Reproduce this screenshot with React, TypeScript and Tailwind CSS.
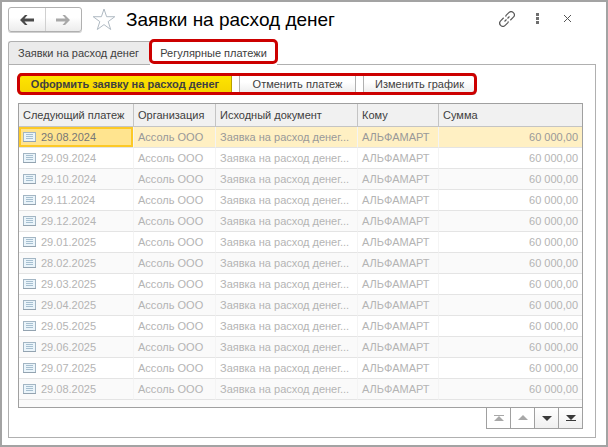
import type { ReactNode } from "react";

const dates = [
  "29.08.2024",
  "29.09.2024",
  "29.10.2024",
  "29.11.2024",
  "29.12.2024",
  "29.01.2025",
  "28.02.2025",
  "29.03.2025",
  "29.04.2025",
  "29.05.2025",
  "29.06.2025",
  "29.07.2025",
  "29.08.2025",
];

function RowIcon() {
  return (
    <svg width="13" height="10" viewBox="0 0 13 10" className="shrink-0" shapeRendering="crispEdges" aria-hidden="true">
      <rect width="13" height="10" fill="#a3b6c4" />
      <rect x="1" y="1" width="11" height="8" fill="#eaf4fa" />
      <rect x="0" y="9" width="13" height="1" fill="#93a3b0" />
      <path d="M3 2.5h7M3 4.5h7M3 6.5h7" stroke="#a6bfd0" />
    </svg>
  );
}

function Header() {
  return (
    <header className="flex h-[39px] items-start pl-[6px] pr-[26px] pt-[5px]">
      <div className="flex h-[25px] w-[74px] rounded-[3px] border border-[#b0b0b0] bg-linear-to-b from-white from-40% to-[#ececec] shadow-[0_1px_0_#d0d0d0]">
        <button type="button" aria-label="Назад" className="flex flex-1 items-center justify-center border-r border-[#d0d0d0]">
          <svg width="14" height="10" viewBox="0 0 14 10" aria-hidden="true">
            <path d="M0 5 5 0h2.500L4.500 3.500H14v3H4.500L7.500 10H5z" fill="#4a4a4a" />
          </svg>
        </button>
        <button type="button" aria-label="Вперед" className="flex flex-1 items-center justify-center">
          <svg width="14" height="10" viewBox="0 0 14 10" aria-hidden="true">
            <path d="M14 5 9 0H6.500l3 3.500H0v3h9.500l-3 3.500H9z" fill="#a8a8a8" />
          </svg>
        </button>
      </div>
      <button type="button" aria-label="В избранное" className="ml-[10px]">
        <svg width="24" height="24" viewBox="0 0 24 24" fill="none" stroke="#b0bac3" aria-hidden="true">
          <path d="M12 2l2.600 7.700h8.200l-6.600 4.900 2.500 7.900-6.700-4.900-6.700 4.900 2.500-7.900-6.600-4.900h8.200z" />
        </svg>
      </button>
      <h1 className="ml-[10px] text-[19px] leading-[25px] text-black">Заявки на расход денег</h1>
      <div className="ml-auto flex h-[23px] items-center">
        <button type="button" aria-label="Получить ссылку" className="mr-[21px]">
          <svg width="16" height="16" viewBox="0 0 16 16" fill="none" stroke="#5a5a5a" strokeWidth="1.200" aria-hidden="true">
            <g transform="rotate(-45 8 8)">
              <path d="M6.500 4.800H2.200a3.200 3.200 0 0 0 0 6.400h3.600a3 3 0 0 0 1.500-.6" />
              <path d="M9.500 11.200h4.300a3.200 3.200 0 0 0 0-6.400h-3.600a3 3 0 0 0-1.500.6" />
              <path d="M4.500 8h2.800M8.700 8h2.800" />
            </g>
          </svg>
        </button>
        <button type="button" aria-label="Ещё" className="mr-[25px]">
          <svg width="3" height="11" viewBox="0 0 3 11" fill="#6e6e6e" aria-hidden="true">
            <path d="M0 0h3v3H0zM0 4h3v3H0zM0 8h3v3H0z" />
          </svg>
        </button>
        <button type="button" aria-label="Закрыть" className="mr-[9px]">
          <svg width="7" height="7" viewBox="0 0 7 7" stroke="#555" aria-hidden="true">
            <path d="M0 0l7 7M7 0L0 7" />
          </svg>
        </button>
      </div>
    </header>
  );
}

function PageButton({ label, disabled, children }: { label: string; disabled?: boolean; children: ReactNode }) {
  return (
    <button
      type="button"
      aria-label={label}
      disabled={disabled}
      className="flex h-[21px] w-[24px] items-center justify-center border-b border-r border-[#a0a0a0] bg-linear-to-b from-white to-[#f0f0f0] text-[#3a3a3a] disabled:bg-none disabled:text-[#a8a8a8]"
    >
      <svg width="10" height="8" viewBox="0 0 10 8" fill="currentColor" aria-hidden="true">
        {children}
      </svg>
    </button>
  );
}

export default function App() {
  return (
    <div className="flex min-h-screen flex-col border-2 border-[#a3a3a3] bg-white font-['Liberation_Sans',Arial,sans-serif] text-[11px] leading-[16px] text-[#404040]">
      <Header />

      <div role="tablist" className="flex h-[23px] pl-[6px]">
        <button type="button" role="tab" aria-selected="false" className="w-[142px] whitespace-nowrap rounded-tl-[3px] border-l border-t border-[#b0b0b0] bg-[#ebebeb] pl-[9px] text-left">
          Заявки на расход денег
        </button>
        <button type="button" role="tab" aria-selected="true" className="relative z-10 -mb-px w-[127px] whitespace-nowrap border-t border-[#b0b0b0] bg-white pb-[2px] text-center">
          Регулярные платежи
          <span className="pointer-events-none absolute -inset-x-px -top-[3px] bottom-px rounded-[5px] border-3 border-[#cc0000]" />
        </button>
      </div>

      <main className="mb-[7px] ml-[6px] mr-[10px] flex-1 border border-[#b0b0b0] px-[9px] pb-[8px] pt-[8px]">
        <div className="relative flex h-[22px] w-[458px] gap-[7px]">
          <button type="button" className="w-[214px] whitespace-nowrap rounded-[3px] border border-[#b9a000] bg-linear-to-b from-[#ffe600] to-[#f5d300] font-bold">
            Оформить заявку на расход денег
          </button>
          <button type="button" className="w-[117px] whitespace-nowrap rounded-[2px] border border-[#b0b0b0] bg-linear-to-b from-white from-40% to-[#ebebeb]">
            Отменить платеж
          </button>
          <button type="button" className="flex-1 whitespace-nowrap rounded-[2px] border border-[#b0b0b0] bg-linear-to-b from-white from-40% to-[#ebebeb]">
            Изменить график
          </button>
          <span className="pointer-events-none absolute -inset-x-px inset-y-0 rounded-[5px] border-3 border-[#cc0000]" />
        </div>

        <div className="mr-[3px] mt-[8px] border border-[#a0a0a0] bg-[#fafafa] pb-[7px]">
          <table className="w-full table-fixed border-separate border-spacing-0">
            <colgroup>
              <col className="w-[115px]" />
              <col className="w-[82px]" />
              <col className="w-[142px]" />
              <col className="w-[81px]" />
              <col />
            </colgroup>
            <thead>
              <tr>
                {["Следующий платеж", "Организация", "Исходный документ", "Кому", "Сумма"].map((title) => (
                  <th key={title} scope="col" className="h-[23px] whitespace-nowrap border-b border-r border-b-[#c4c4c4] border-r-[#c4c4c4] bg-[#f1f1f1] p-0 pl-[4px] text-left font-normal last:border-r-0">
                    {title}
                  </th>
                ))}
              </tr>
            </thead>
            <tbody className="[&_td]:h-[21px] [&_td]:whitespace-nowrap [&_td]:border-b [&_td]:border-r [&_td]:border-b-[#e4e4e4] [&_td]:border-r-[#f4f4f4] [&_td]:px-[4px] [&_td]:py-0 [&_td:last-child]:border-r-0">
              {dates.map((date, i) => (
                <tr
                  key={date}
                  className={i === 0 ? "bg-[#fff0c3] text-[#999]" : "bg-white text-[#b4b4b4] odd:bg-[#fafafa]"}
                >
                  <td className={i === 0 ? "bg-[#ffe48f] text-[#777] shadow-[inset_0_0_0_2px_#fcc927]" : ""}>
                    <div className="flex items-center gap-[5px]">
                      <RowIcon />
                      {date}
                    </div>
                  </td>
                  <td>Ассоль ООО</td>
                  <td>Заявка на расход денег...</td>
                  <td>АЛЬФАМАРТ</td>
                  <td className="text-right">60 000,00</td>
                </tr>
              ))}
            </tbody>
          </table>
        </div>

        <div className="mr-[3px] flex justify-end">
          <div className="flex border-l border-[#a0a0a0]">
            <PageButton label="В начало" disabled>
              <path d="M0 1h10v1H0zM5 2l5 5H0z" />
            </PageButton>
            <PageButton label="Вверх" disabled>
              <path d="M5 1l5 5H0z" />
            </PageButton>
            <PageButton label="Вниз">
              <path d="M0 2h10L5 7z" />
            </PageButton>
            <PageButton label="В конец">
              <path d="M0 1h10L5 6zM0 6h10v1H0z" />
            </PageButton>
          </div>
        </div>
      </main>
    </div>
  );
}
